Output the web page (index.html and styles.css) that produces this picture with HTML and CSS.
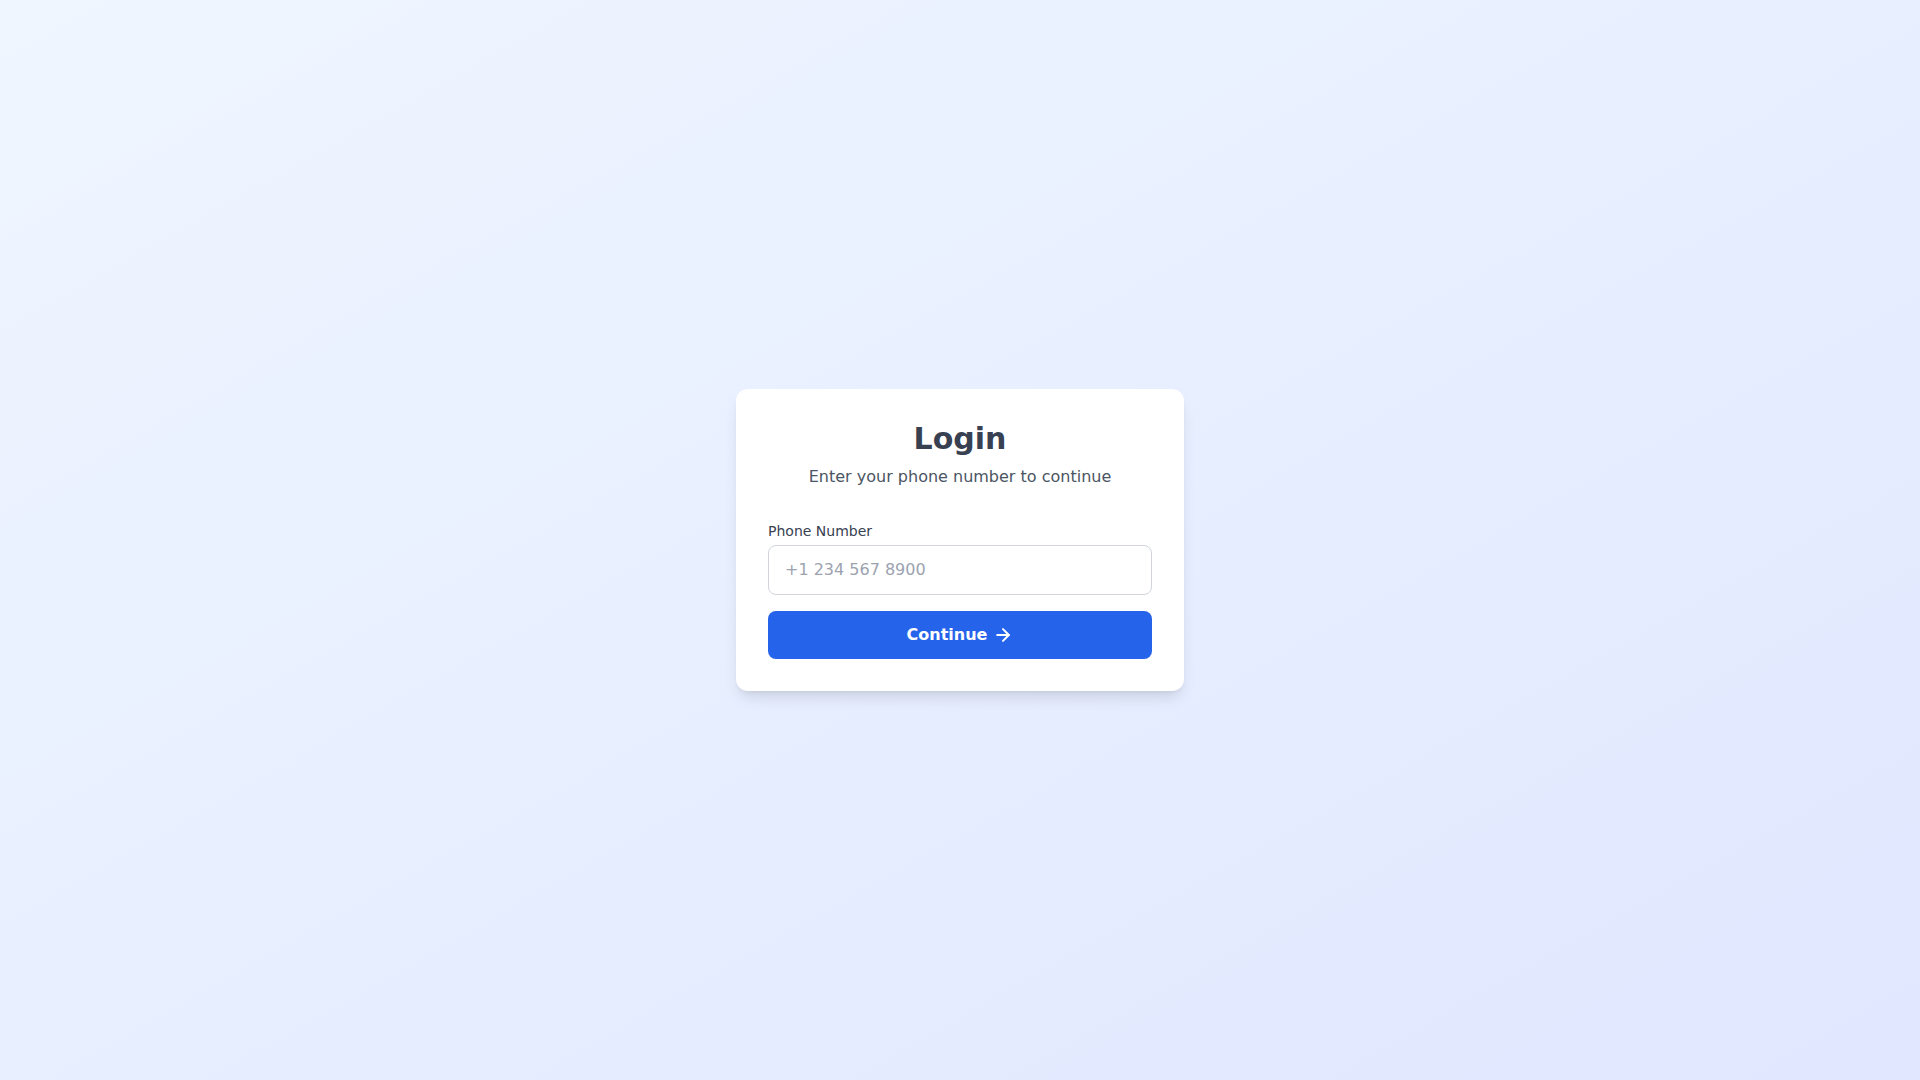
FILE: index.html
```html
<!DOCTYPE html>
<html lang="en">
<head>
  <meta charset="UTF-8">
  <meta name="viewport" content="width=device-width, initial-scale=1.0">
  <title>Login</title>
  <link rel="stylesheet" href="styles.css">
</head>
<body>
  <main class="page">
    <form class="card" onsubmit="return false">
      <div class="card-header">
        <h1 class="title">Login</h1>
        <p class="subtitle">Enter your phone number to continue</p>
      </div>
      <label class="label" for="phone">Phone Number</label>
      <input class="input" id="phone" type="tel" placeholder="+1 234 567 8900">
      <button class="button" type="submit">
        <span>Continue</span>
        <svg class="icon" viewBox="0 0 24 24" fill="none" stroke="currentColor" stroke-width="2.4" stroke-linecap="round" stroke-linejoin="round">
          <path d="M5 12h14"/>
          <path d="m12 5 7 7-7 7"/>
        </svg>
      </button>
    </form>
  </main>
</body>
</html>
```

FILE: styles.css
```css
* {
  box-sizing: border-box;
}
body {
  margin: 0;
  font-family: "DejaVu Sans", sans-serif;
  background: linear-gradient(to bottom right, #eff6ff, #e0e7ff);
  min-height: 100vh;
}
.page {
  min-height: 100vh;
  display: flex;
  align-items: center;
  justify-content: center;
}
.card {
  width: 448px;
  background: #fff;
  border-radius: 12px;
  padding: 32px;
  box-shadow: 0 10px 15px -3px rgba(0, 0, 0, 0.1), 0 4px 6px -4px rgba(0, 0, 0, 0.1);
  display: flex;
  flex-direction: column;
}
.card-header {
  text-align: center;
  margin-bottom: 32px;
}
.title {
  margin: 0;
  font-size: 30px;
  line-height: 36px;
  font-weight: bold;
  color: #374151;
}
.subtitle {
  margin: 8px 0 0;
  font-size: 16px;
  line-height: 24px;
  color: #4b5563;
}
.label {
  font-size: 14px;
  line-height: 20px;
  font-weight: 500;
  color: #374151;
  margin-bottom: 4px;
}
.input {
  width: 100%;
  padding: 12px 16px;
  font-family: inherit;
  font-size: 16px;
  line-height: 24px;
  border: 1px solid #d1d5db;
  border-radius: 8px;
  color: #111827;
  outline: none;
}
.input::placeholder {
  color: #9ca3af;
}
.button {
  margin-top: 16px;
  width: 100%;
  padding: 12px 16px;
  border: none;
  border-radius: 8px;
  background: #2563eb;
  color: #fff;
  font-family: inherit;
  font-size: 16px;
  line-height: 24px;
  font-weight: bold;
  display: flex;
  align-items: center;
  justify-content: center;
  gap: 6px;
  cursor: pointer;
}
.button:hover {
  background: #1d4ed8;
}
.icon {
  width: 20px;
  height: 20px;
}
```
